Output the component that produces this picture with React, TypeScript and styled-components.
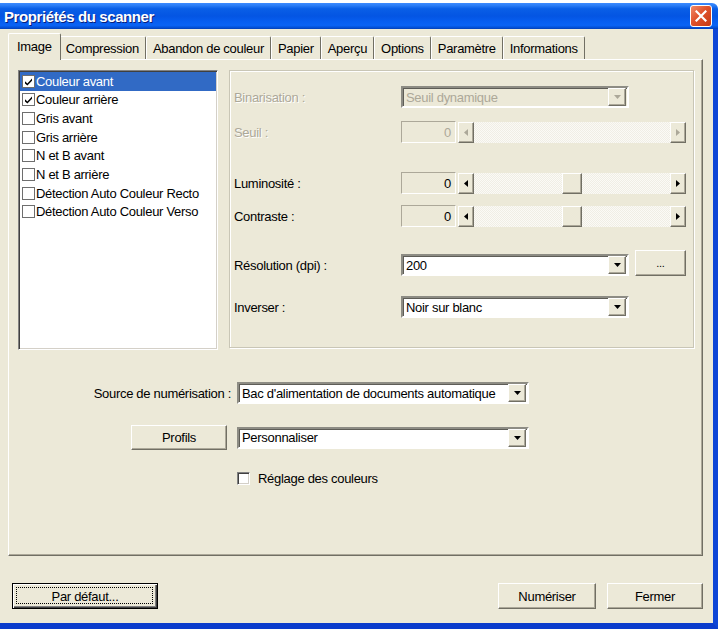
import React from 'react';
import styled, { createGlobalStyle, css } from 'styled-components';

const GlobalStyle = createGlobalStyle`
  html, body {
    margin: 0;
    padding: 0;
    background: #ffffff;
  }
  body {
    font-family: "Liberation Sans", Arial, sans-serif;
    font-size: 13px;
    letter-spacing: -0.3px;
    color: #000;
  }
  * {
    box-sizing: border-box;
  }
`;

const raised = css`
  background-color: #ece9d8;
  border: 1px solid;
  border-color: #ffffff #716f64 #716f64 #ffffff;
  box-shadow: inset -1px -1px 0 #aca899;
`;

const sunken = css`
  border: 2px solid;
  border-color: #8d8c84 #ffffff #ffffff #8d8c84;
  box-shadow: inset 1px 1px 0 #5e5d57;
`;

const Window = styled.div`
  width: 718px;
  height: 629px;
  padding-top: 3px;
  display: flex;
  flex-direction: column;
`;

const TitleBar = styled.div`
  height: 26px;
  display: flex;
  align-items: center;
  justify-content: space-between;
  padding: 0 6px 0 4px;
  border-top-right-radius: 6px;
  background: linear-gradient(
    180deg,
    #3d8bff 0%,
    #2a7cf5 10%,
    #0a5fe6 22%,
    #0455e3 50%,
    #075ef0 72%,
    #0a63f4 86%,
    #0451d8 94%,
    #0340b5 100%
  );
`;

const TitleText = styled.span`
  color: #ffffff;
  font-weight: bold;
  font-size: 15px;
  letter-spacing: -0.4px;
  text-shadow: 1px 1px 0 #0a1f7a;
`;

const CloseButton = styled.div`
  width: 22px;
  height: 22px;
  border: 1px solid #ffffff;
  border-radius: 3px;
  display: flex;
  align-items: center;
  justify-content: center;
  background: linear-gradient(135deg, #f08a6a 0%, #e0522c 45%, #c53a14 100%);
`;

const Body = styled.div`
  flex: 1;
  background: #ece9d8;
  border-right: 5px solid #0d45d6;
  border-bottom: 6px solid #0a3ccc;
  padding-top: 3px;
  display: flex;
  flex-direction: column;
`;

const TabStrip = styled.div`
  height: 27px;
  display: flex;
  align-items: flex-end;
  padding-left: 10px;
  position: relative;
  z-index: 2;
`;

const Tab = styled.div<{ $active?: boolean }>`
  height: 23px;
  padding: 0 6px;
  display: flex;
  align-items: center;
  background: #ece9d8;
  border-top: 1px solid #ffffff;
  border-left: 1px solid #ffffff;
  border-right: 1px solid #716f64;
  border-radius: 2px 2px 0 0;
  white-space: nowrap;

  ${({ $active }) =>
    $active &&
    css`
      height: 27px;
      margin: 0 -2px -1px -2px;
      padding: 0 8px 1px 8px;
      position: relative;
      z-index: 3;
    `}
`;

const TabPanel = styled.div`
  width: 695px;
  height: 497px;
  margin-left: 8px;
  border: 1px solid;
  border-color: #ffffff #716f64 #716f64 #ffffff;
  box-shadow: inset -1px -1px 0 #aca899;
  padding: 10px 0 0 9px;
`;

const TopRow = styled.div`
  display: flex;
  gap: 11px;
  height: 280px;
`;

const ListBox = styled.div`
  width: 200px;
  height: 280px;
  background: #ffffff;
  border: 1px solid;
  border-color: #828282 #ffffff #ffffff #828282;
  box-shadow: inset 1px 1px 0 #404040, inset -1px -1px 0 #d4d0c8;
  padding: 1px;
`;

const ListRow = styled.div<{ $selected?: boolean }>`
  height: 18.66px;
  display: flex;
  align-items: center;
  gap: 1px;
  padding-left: 2px;
  white-space: nowrap;
  background: ${({ $selected }) => ($selected ? '#316ac5' : 'transparent')};
  color: ${({ $selected }) => ($selected ? '#ffffff' : '#000000')};
`;

const ListCheck = styled.span`
  width: 13px;
  height: 13px;
  flex: none;
  background: #ffffff;
  border: 1px solid #6e6e6e;
  display: flex;
  align-items: center;
  justify-content: center;
`;

const GroupBox = styled.div`
  width: 465px;
  height: 278px;
  border: 1px solid #c9c6b6;
  box-shadow: inset 1px 1px 0 #ffffff, 1px 1px 0 #ffffff;
  padding: 15px 0 0 4px;
`;

const FieldRow = styled.div<{ $gap: number }>`
  display: grid;
  grid-template-columns: 167px auto;
  align-items: center;
  height: 22px;
  margin-top: ${({ $gap }) => $gap}px;
`;

const FieldLabel = styled.span<{ $disabled?: boolean }>`
  color: ${({ $disabled }) => ($disabled ? '#aca899' : '#000000')};
  text-shadow: ${({ $disabled }) => ($disabled ? '1px 1px 0 #ffffff' : 'none')};
`;

const Controls = styled.div`
  display: flex;
  align-items: center;
  height: 22px;
`;

const Combo = styled.div<{ $width: number; $disabled?: boolean }>`
  ${sunken};
  width: ${({ $width }) => $width}px;
  height: 22px;
  display: flex;
  align-items: center;
  padding: 0 1px 0 3px;
  background: ${({ $disabled }) => ($disabled ? '#ece9d8' : '#ffffff')};
  color: ${({ $disabled }) => ($disabled ? '#aca899' : '#000000')};
`;

const ComboText = styled.span`
  flex: 1;
  white-space: nowrap;
  overflow: hidden;
`;

const DropButton = styled.span`
  ${raised};
  width: 18px;
  height: 18px;
  flex: none;
  display: flex;
  align-items: center;
  justify-content: center;
`;

const ValueBox = styled.div<{ $disabled?: boolean }>`
  width: 55px;
  height: 22px;
  border: 1px solid;
  border-color: #aca899 #ffffff #ffffff #aca899;
  background: #ece9d8;
  display: flex;
  align-items: center;
  justify-content: flex-end;
  padding-right: 4px;
  color: ${({ $disabled }) => ($disabled ? '#aca899' : '#000000')};
`;

const ScrollBar = styled.div`
  width: 228px;
  height: 21px;
  margin-left: 2px;
  display: flex;
`;

const ScrollArrow = styled.span`
  ${raised};
  width: 16px;
  height: 21px;
  flex: none;
  display: flex;
  align-items: center;
  justify-content: center;
`;

const ScrollTrack = styled.div`
  flex: 1;
  position: relative;
  background: repeating-conic-gradient(#fbfaf6 0 25%, #f0eee5 0 50%) 0 0 / 2px 2px;
`;

const ScrollThumb = styled.span`
  ${raised};
  position: absolute;
  top: 0;
  width: 20px;
  height: 21px;
`;

const SmallButton = styled.div`
  ${raised};
  width: 51px;
  height: 26px;
  margin-left: 6px;
  align-self: flex-end;
  display: flex;
  align-items: center;
  justify-content: center;
  font-size: 11px;
`;

const BottomForm = styled.div`
  margin-top: 32px;
  display: grid;
  grid-template-columns: 213px 292px;
  grid-template-rows: 22px 25px 14px;
  column-gap: 6px;
  row-gap: 21px;
  align-items: center;
`;

const FormLabel = styled.span`
  justify-self: end;
  white-space: nowrap;
`;

const PushButton = styled.div<{ $width: number }>`
  ${raised};
  width: ${({ $width }) => $width}px;
  height: 26px;
  display: flex;
  align-items: center;
  justify-content: center;
  white-space: nowrap;
`;

const ProfileButton = styled(PushButton)`
  justify-self: end;
  margin-right: 4px;
  height: 25px;
`;

const CheckLine = styled.label`
  grid-column: 2;
  display: flex;
  align-items: center;
  gap: 8px;
  white-space: nowrap;
`;

const ClassicCheck = styled.span`
  width: 13px;
  height: 13px;
  background: #ffffff;
  border: 1px solid;
  border-color: #808080 #ffffff #ffffff #808080;
  box-shadow: inset 1px 1px 0 #404040, inset -1px -1px 0 #d4d0c8;
`;

const ButtonRow = styled.div`
  margin-top: 27px;
  display: flex;
  align-items: center;
  padding: 0 10px 0 12px;
  gap: 11px;
`;

const DefaultButton = styled.div`
  width: 146px;
  height: 26px;
  margin-right: auto;
  position: relative;
  border: 1px solid #000000;
  background: #ece9d8;
  box-shadow: inset 1px 1px 0 #ffffff, inset -1px -1px 0 #404040, inset -2px -2px 0 #808080;
  display: flex;
  align-items: center;
  justify-content: center;

  &::after {
    content: '';
    position: absolute;
    inset: 3px 4px 4px 3px;
    border: 1px dotted #000000;
  }
`;

const Arrow = ({ dir, disabled }: { dir: 'left' | 'right' | 'down'; disabled?: boolean }) => {
  const fill = disabled ? '#aca899' : '#000000';
  if (dir === 'down') {
    return (
      <svg width="7" height="4" viewBox="0 0 7 4">
        <polygon points="0,0 7,0 3.5,4" fill={fill} />
      </svg>
    );
  }
  return (
    <svg width="4" height="7" viewBox="0 0 4 7">
      <polygon points={dir === 'left' ? '4,0 0,3.5 4,7' : '0,0 4,3.5 0,7'} fill={fill} />
    </svg>
  );
};

const CheckMark = () => (
  <svg width="9" height="9" viewBox="0 0 9 9">
    <path d="M1 4.2 L3.4 6.4 L8 1.6 L8 3.8 L3.4 8.6 L1 6.4 Z" fill="#000000" />
  </svg>
);

const ComboBox = ({ width, text, disabled }: { width: number; text: string; disabled?: boolean }) => (
  <Combo $width={width} $disabled={disabled}>
    <ComboText>{text}</ComboText>
    <DropButton>
      <Arrow dir="down" disabled={disabled} />
    </DropButton>
  </Combo>
);

const TRACK_WIDTH = 228 - 32;
const THUMB_WIDTH = 20;

const Slider = ({ value, disabled }: { value: number; disabled?: boolean }) => {
  const left = ((value + 100) / 200) * (TRACK_WIDTH - THUMB_WIDTH);
  return (
    <>
      <ValueBox $disabled={disabled}>{value}</ValueBox>
      <ScrollBar>
        <ScrollArrow>
          <Arrow dir="left" disabled={disabled} />
        </ScrollArrow>
        <ScrollTrack>{!disabled && <ScrollThumb style={{ left }} />}</ScrollTrack>
        <ScrollArrow>
          <Arrow dir="right" disabled={disabled} />
        </ScrollArrow>
      </ScrollBar>
    </>
  );
};

const tabs = ['Image', 'Compression', 'Abandon de couleur', 'Papier', 'Aperçu', 'Options', 'Paramètre', 'Informations'];

const imageTypes = [
  { label: 'Couleur avant', checked: true, selected: true },
  { label: 'Couleur arrière', checked: true },
  { label: 'Gris avant' },
  { label: 'Gris arrière' },
  { label: 'N et B avant' },
  { label: 'N et B arrière' },
  { label: 'Détection Auto Couleur Recto' },
  { label: 'Détection Auto Couleur Verso' },
];

const App: React.FC = () => (
  <>
    <GlobalStyle />
    <Window>
      <TitleBar>
        <TitleText>Propriétés du scanner</TitleText>
        <CloseButton>
          <svg width="12" height="12" viewBox="0 0 12 12">
            <path d="M1.5 1.5 L10.5 10.5 M10.5 1.5 L1.5 10.5" stroke="#ffffff" strokeWidth="2.2" strokeLinecap="square" />
          </svg>
        </CloseButton>
      </TitleBar>
      <Body>
        <TabStrip>
          {tabs.map((t, i) => (
            <Tab key={t} $active={i === 0}>
              {t}
            </Tab>
          ))}
        </TabStrip>
        <TabPanel>
          <TopRow>
            <ListBox>
              {imageTypes.map((item) => (
                <ListRow key={item.label} $selected={item.selected}>
                  <ListCheck>{item.checked && <CheckMark />}</ListCheck>
                  {item.label}
                </ListRow>
              ))}
            </ListBox>
            <GroupBox>
              <FieldRow $gap={0}>
                <FieldLabel $disabled>Binarisation :</FieldLabel>
                <Controls>
                  <ComboBox width={228} text="Seuil dynamique" disabled />
                </Controls>
              </FieldRow>
              <FieldRow $gap={13}>
                <FieldLabel $disabled>Seuil :</FieldLabel>
                <Controls>
                  <Slider value={0} disabled />
                </Controls>
              </FieldRow>
              <FieldRow $gap={29}>
                <FieldLabel>Luminosité :</FieldLabel>
                <Controls>
                  <Slider value={0} />
                </Controls>
              </FieldRow>
              <FieldRow $gap={11}>
                <FieldLabel>Contraste :</FieldLabel>
                <Controls>
                  <Slider value={0} />
                </Controls>
              </FieldRow>
              <FieldRow $gap={27}>
                <FieldLabel>Résolution (dpi) :</FieldLabel>
                <Controls>
                  <ComboBox width={228} text="200" />
                  <SmallButton>...</SmallButton>
                </Controls>
              </FieldRow>
              <FieldRow $gap={20}>
                <FieldLabel>Inverser :</FieldLabel>
                <Controls>
                  <ComboBox width={228} text="Noir sur blanc" />
                </Controls>
              </FieldRow>
            </GroupBox>
          </TopRow>
          <BottomForm>
            <FormLabel>Source de numérisation :</FormLabel>
            <ComboBox width={292} text="Bac d'alimentation de documents automatique" />
            <ProfileButton $width={96}>Profils</ProfileButton>
            <ComboBox width={292} text="Personnaliser" />
            <CheckLine>
              <ClassicCheck />
              Réglage des couleurs
            </CheckLine>
          </BottomForm>
        </TabPanel>
        <ButtonRow>
          <DefaultButton>Par défaut...</DefaultButton>
          <PushButton $width={98}>Numériser</PushButton>
          <PushButton $width={96}>Fermer</PushButton>
        </ButtonRow>
      </Body>
    </Window>
  </>
);

export default App;
